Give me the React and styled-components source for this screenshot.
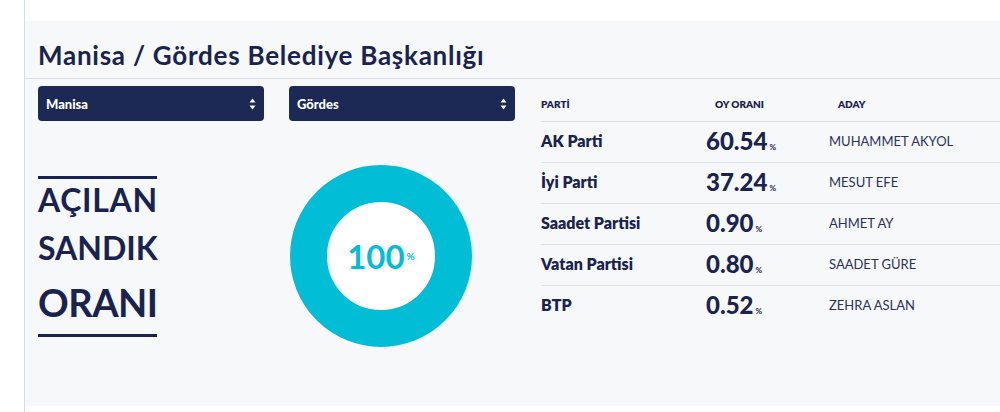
import React from "react";
import styled, { createGlobalStyle } from "styled-components";

const GlobalStyle = createGlobalStyle`
  html, body {
    margin: 0;
    padding: 0;
    background: #ffffff;
  }
  body {
    font-family: "Lato", "Liberation Sans", sans-serif;
    color: #1a2350;
  }
`;

const navy = "#1a2350";
const teal = "#02bdd6";

const results = [
  { party: "AK Parti", rate: "60.54", candidate: "MUHAMMET AKYOL" },
  { party: "İyi Parti", rate: "37.24", candidate: "MESUT EFE" },
  { party: "Saadet Partisi", rate: "0.90", candidate: "AHMET AY" },
  { party: "Vatan Partisi", rate: "0.80", candidate: "SAADET GÜRE" },
  { party: "BTP", rate: "0.52", candidate: "ZEHRA ASLAN" },
];

const Page = styled.div`
  height: 412px;
  padding-left: 24px;
  box-sizing: border-box;
`;

const Frame = styled.div`
  height: 412px;
  padding-top: 21px;
  border-left: 1px solid #d3dbe4;
  box-sizing: border-box;
`;

const Panel = styled.section`
  height: 385px;
  background: #f6f8fa;
`;

const Title = styled.h1`
  margin: 0;
  padding: 17px 0 0 13px;
  height: 40px;
  font-size: 26px;
  line-height: 34px;
  font-weight: 700;
  letter-spacing: 0.75px;
  color: ${navy};
`;

const Divider = styled.div`
  height: 1px;
  background: #dce1e7;
`;

const Body = styled.div`
  display: flex;
  gap: 26px;
  padding-left: 13px;
`;

const Left = styled.div`
  width: 477px;
`;

const TwoCols = styled.div`
  display: grid;
  grid-template-columns: 226px 226px;
  column-gap: 25px;
  align-items: center;
`;

const SelectRow = styled(TwoCols)`
  padding-top: 7px;
`;

const SelectBox = styled.div`
  height: 35px;
  border-radius: 4px;
  background: #1c2954;
  color: #ffffff;
  display: flex;
  align-items: center;
  justify-content: space-between;
  padding: 0 8px;
  box-sizing: border-box;
  font-size: 13px;
  font-weight: 900;
`;

const Arrows = () => (
  <svg width="7" height="12" viewBox="0 0 7 12">
    <path d="M3.5 0.5 L6.5 4.5 L0.5 4.5 Z M3.5 11.5 L6.5 7.5 L0.5 7.5 Z" fill="#ffffff" />
  </svg>
);

const ChartRow = styled(TwoCols)`
  padding-top: 44px;
`;

const Label = styled.div`
  width: 119px;
  border-top: 3px solid ${navy};
  border-bottom: 3px solid ${navy};
  padding-bottom: 6px;
  color: ${navy};
  font-weight: 700;
  text-transform: uppercase;
`;

const LabelLine = styled.div`
  font-size: ${(p) => p.size}px;
  line-height: ${(p) => p.lh}px;
  letter-spacing: ${(p) => p.ls}px;
  white-space: nowrap;
`;

const Donut = styled.div`
  width: 182px;
  height: 182px;
  box-sizing: border-box;
  border: 37px solid ${teal};
  border-radius: 50%;
  background: #ffffff;
  display: flex;
  align-items: center;
  justify-content: center;
  color: ${teal};
  font-size: 33px;
  font-weight: 700;
  margin-left: 1px;
`;

const Small = styled.span`
  font-size: ${(p) => p.size || 8}px;
  font-weight: 700;
  margin-left: 2px;
`;

const Table = styled.div`
  flex: 1;
  padding-top: 7px;
`;

const Grid = styled.div`
  display: grid;
  grid-template-columns: 165px 123px 1fr;
  align-items: center;
  height: ${(p) => p.h}px;
  padding-bottom: ${(p) => (p.line ? 3 : 0)}px;
  box-sizing: border-box;
  border-top: ${(p) => (p.line ? "1px solid #dce1e7" : "none")};
`;

const Head = styled.div`
  font-size: 10px;
  font-weight: 800;
  color: ${navy};
  padding-left: ${(p) => (p.indent ? 9 : 0)}px;
`;

const Party = styled.div`
  font-size: 16px;
  font-weight: 800;
  color: ${navy};
`;

const Rate = styled.div`
  font-size: 24px;
  font-weight: 900;
  color: ${navy};
`;

const Candidate = styled.div`
  font-size: 13px;
  font-weight: 400;
  color: #2b3259;
`;

export default function App() {
  return (
    <Page>
      <GlobalStyle />
      <Frame>
        <Panel>
          <Title>Manisa / Gördes Belediye Başkanlığı</Title>
          <Divider />
          <Body>
            <Left>
              <SelectRow>
                <SelectBox>
                  Manisa
                  <Arrows />
                </SelectBox>
                <SelectBox>
                  Gördes
                  <Arrows />
                </SelectBox>
              </SelectRow>
              <ChartRow>
                <Label>
                  <LabelLine size={32} lh={41} ls={0.7}>Açılan</LabelLine>
                  <LabelLine size={32} lh={56} ls={0}>Sandık</LabelLine>
                  <LabelLine size={38} lh={52} ls={-0.5}>Oranı</LabelLine>
                </Label>
                <Donut>
                  100<Small size={10}>%</Small>
                </Donut>
              </ChartRow>
            </Left>
            <Table>
              <Grid h={35}>
                <Head>PARTİ</Head>
                <Head indent>OY ORANI</Head>
                <Head indent>ADAY</Head>
              </Grid>
              {results.map((r) => (
                <Grid key={r.party} h={41} line>
                  <Party>{r.party}</Party>
                  <Rate>
                    {r.rate}
                    <Small>%</Small>
                  </Rate>
                  <Candidate>{r.candidate}</Candidate>
                </Grid>
              ))}
            </Table>
          </Body>
        </Panel>
      </Frame>
    </Page>
  );
}
